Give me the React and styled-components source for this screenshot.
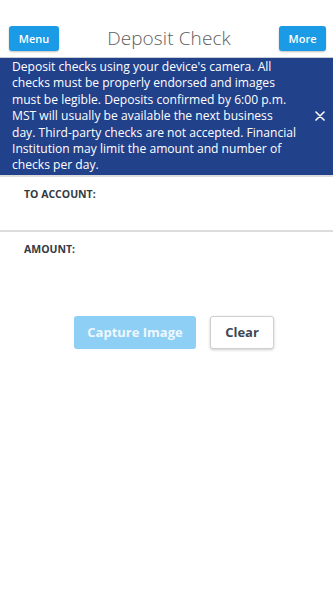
import React from 'react'
import styled, { createGlobalStyle } from 'styled-components'

const navyColor = '#22418b';
const brandBlue = '#1b9be6';
const labelColor = '#333a44';
const lineColor = '#dcdcdc';

const noticeLines = [
  "Deposit checks using your device's camera. All",
  'checks must be properly endorsed and images',
  'must be legible. Deposits confirmed by 6:00 p.m.',
  'MST will usually be available the next business',
  'day. Third-party checks are not accepted. Financial',
  'Institution may limit the amount and number of',
  'checks per day.',
];

const GlobalStyle = createGlobalStyle`
html, body {
  margin: 0;
  padding: 0;
  background: #ffffff;
  font-family: "Open Sans", "Noto Sans", Arial, sans-serif;
}
* { box-sizing: border-box; }
`;

const Page = styled.div`
display: flex;
flex-direction: column;
width: 333px;
min-height: 592px;
background: #ffffff;
`;

const Header = styled.div`
display: flex;
flex-direction: row;
align-items: center;
justify-content: space-between;
height: 58px;
padding: 22px 7px 3px 9px;
border-bottom: 1px solid #c9cdd6;
`;

const HeaderButton = styled.button`
height: 25px;
width: ${props => props.$w}px;
border: none;
border-radius: 3px;
background-color: ${brandBlue};
color: #ffffff;
font-family: "Open Sans", Arial, sans-serif;
font-size: 11px;
font-weight: 600;
padding: 0;
box-shadow: 0 1px 2px rgba(0, 0, 0, 0.25);
`;

const Title = styled.div`
font-family: "Open Sans", Arial, sans-serif;
font-size: 19px;
font-weight: 300;
color: #606060;
letter-spacing: 0.1px;
`;

const Banner = styled.div`
display: flex;
flex-direction: row;
align-items: center;
background-color: ${navyColor};
padding: 1px 5px 1px 12px;
gap: 7px;
`;

const BannerText = styled.div`
flex: 1;
font-family: "Open Sans", Arial, sans-serif;
font-size: 12.1px;
line-height: 16.4px;
color: #ffffff;
white-space: nowrap;
`;

const BannerLine = styled.span`
display: block;
`;

const CloseButton = styled.div`
display: flex;
align-items: center;
justify-content: center;
width: 16px;
height: 16px;
`;

const Field = styled.div`
height: 55px;
border-top: 2px solid ${lineColor};
padding: 10px 24px;
&:last-of-type {
  border-bottom: 1px solid ${lineColor};
}
`;

const FieldLabel = styled.div`
font-family: "Open Sans", Arial, sans-serif;
font-size: 10.5px;
font-weight: 700;
color: ${labelColor};
`;

const Actions = styled.div`
display: flex;
flex-direction: row;
justify-content: center;
gap: 14px;
padding: 31px 0 0 15px;
`;

const ActionButton = styled.button`
height: 33px;
width: ${props => props.$w}px;
border-radius: 3px;
font-family: "Open Sans", Arial, sans-serif;
font-size: 13px;
font-weight: 700;
padding: 0;
border: ${props => props.$primary ? 'none' : '1px solid #cfcfcf'};
background-color: ${props => props.$primary ? '#8ecff5' : '#ffffff'};
color: ${props => props.$primary ? '#eef8ff' : '#3c4858'};
box-shadow: ${props => props.$primary ? 'none' : '0 1px 3px rgba(0, 0, 0, 0.2)'};
`;

const App = () => {
  return (
    <Page>
      <GlobalStyle />
      <Header>
        <HeaderButton $w={50}>Menu</HeaderButton>
        <Title>Deposit Check</Title>
        <HeaderButton $w={47}>More</HeaderButton>
      </Header>
      <Banner>
        <BannerText>
          {noticeLines.map((line) => (
            <BannerLine key={line}>{line}</BannerLine>
          ))}
        </BannerText>
        <CloseButton>
          <svg width="10" height="10" viewBox="0 0 10 10">
            <path d="M1 1 L9 9 M9 1 L1 9" stroke="#ffffff" strokeWidth="1.6" strokeLinecap="round" />
          </svg>
        </CloseButton>
      </Banner>
      <Field>
        <FieldLabel>TO ACCOUNT:</FieldLabel>
      </Field>
      <Field>
        <FieldLabel>AMOUNT:</FieldLabel>
      </Field>
      <Actions>
        <ActionButton $primary $w={122}>Capture Image</ActionButton>
        <ActionButton $w={64}>Clear</ActionButton>
      </Actions>
    </Page>
  )
}

export default App
